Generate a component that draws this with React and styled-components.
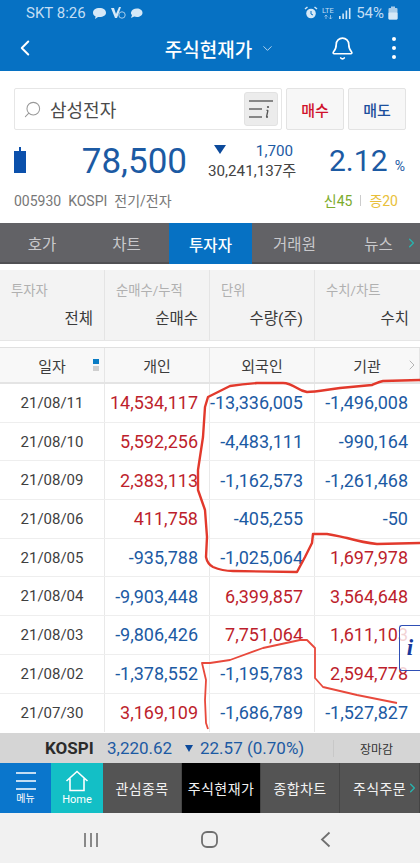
import styled, { createGlobalStyle } from "styled-components"
import { Bell, ChevronDown, ChevronLeft, ChevronRight, Search } from "lucide-react"

const FONT = `Roboto, "Noto Sans CJK KR", sans-serif`
const BLUE = "#1c5aa3"
const RED = "#bd1e2c"

const GlobalStyle = createGlobalStyle`
  html, body { margin: 0; padding: 0; background: #fff; }
  body { font-family: ${FONT}; }
  * { box-sizing: border-box; }
`

const Page = styled.div`
  position: relative;
  width: 420px;
  height: 863px;
  overflow: hidden;
  display: flex;
  flex-direction: column;
  background: #fff;
`

const TopArea = styled.header`
  height: 71px;
  background: #0671c3;
  color: #fff;
  display: flex;
  flex-direction: column;
`

const StatusBar = styled.div`
  height: 25px;
  padding: 1px 22px 0 26px;
  display: flex;
  align-items: center;
  justify-content: space-between;
  color: #c3def4;
  font-size: 15px;
`

const StatusGroup = styled.div`
  display: flex;
  align-items: center;
  gap: ${(props) => props.$gap || 4}px;
`

const TitleBar = styled.div`
  flex: 1;
  padding: 0 24px 0 12px;
  display: grid;
  grid-template-columns: 60px 1fr 60px;
  align-items: center;
`

const Title = styled.div`
  display: flex;
  align-items: center;
  justify-content: center;
  gap: 8px;
  padding-left: 32px;
  font-size: 19px;
  font-weight: 500;
  white-space: nowrap;
`

const TitleActions = styled.div`
  display: flex;
  align-items: center;
  justify-content: flex-end;
  gap: 37px;
  svg { flex-shrink: 0; }
`

const Dots = styled.div`
  display: flex;
  flex-direction: column;
  flex-shrink: 0;
  gap: 5px;
  span {
    width: 4px;
    height: 4px;
    border-radius: 50%;
    background: #fff;
  }
`

const SearchRow = styled.div`
  padding: 17px 14px 0;
  display: flex;
  gap: 4px;
`

const SearchBox = styled.div`
  width: 268px;
  height: 42px;
  padding: 0 3px 0 8px;
  display: flex;
  align-items: center;
  border: 1px solid #e6e6e6;
  border-radius: 2px;
  color: #4a4a4a;
  font-size: 18px;
`

const SearchText = styled.span`
  flex: 1;
  margin-left: 8px;
`

const ListButton = styled.div`
  width: 34px;
  height: 34px;
  display: flex;
  align-items: center;
  justify-content: center;
  background: #ececec;
  border: 1px solid #e2e2e2;
  border-radius: 3px;
`

const TradeButton = styled.div`
  width: 58px;
  height: 42px;
  display: flex;
  align-items: center;
  justify-content: center;
  background: #f7f7f7;
  border: 1px solid #e3e3e3;
  border-radius: 2px;
  color: ${(props) => props.$color};
  font-size: 15px;
  font-weight: 500;
`

const QuoteRow = styled.div`
  height: 58px;
  padding: 5px 15px 0 14px;
  display: flex;
  align-items: center;
`

const Candle = styled.div`
  position: relative;
  width: 12px;
  height: 22px;
  margin-top: 1px;
  background: #0b50ab;
  &::before {
    content: "";
    position: absolute;
    left: 5px;
    top: -4px;
    width: 2px;
    height: 4px;
    background: #0b50ab;
  }
`

const Price = styled.div`
  width: 161px;
  text-align: right;
  color: ${BLUE};
  font-size: 35px;
  line-height: 40px;
`

const Change = styled.div`
  width: 109px;
  padding-left: 21px;
  display: flex;
  flex-direction: column;
  font-size: 15.2px;
  line-height: 19px;
`

const ChangeTop = styled.div`
  display: flex;
  justify-content: space-between;
  align-items: center;
  padding-right: 3px;
  color: ${BLUE};
`

const DownMark = styled.span`
  width: 0;
  height: 0;
  border-left: ${(props) => props.$size}px solid transparent;
  border-right: ${(props) => props.$size}px solid transparent;
  border-top: ${(props) => props.$size * 1.6}px solid #0c4a9b;
  ${(props) => props.$lift && `margin-top: -5px; margin-left: 6px;`}
`

const Volume = styled.div`
  color: #444;
  white-space: nowrap;
  margin-top: 1px;
`

const Rate = styled.div`
  flex: 1;
  margin-top: -3px;
  padding-left: 33px;
  display: flex;
  align-items: baseline;
  justify-content: space-between;
  color: ${BLUE};
  font-size: 30px;
  small { font-size: 14px; }
`

const MetaRow = styled.div`
  height: 33px;
  padding: 0 22px 9px 14px;
  display: flex;
  align-items: center;
  justify-content: space-between;
  color: #777;
  font-size: 14px;
`

const Signals = styled.div`
  display: flex;
  align-items: center;
  gap: 8px;
  font-size: 14px;
  i { width: 1px; height: 11px; background: #ccc; }
`

const Signal = styled.span`
  color: ${(props) => props.$color};
`

const Tabs = styled.nav`
  height: 41px;
  margin-top: 2px;
  position: relative;
  display: grid;
  grid-template-columns: 84px 85px 83px 85px 83px;
  background: #626266;
  border-bottom: 2px solid #515154;
`

const Tab = styled.div`
  display: flex;
  align-items: center;
  justify-content: center;
  margin-bottom: ${(props) => (props.$active ? -2 : 0)}px;
  background: ${(props) => (props.$active ? "#0671c3" : "transparent")};
  color: ${(props) => (props.$active ? "#fff" : "#c9c9cc")};
  font-size: 15.5px;
  font-weight: ${(props) => (props.$active ? 500 : 400)};
`

const MoreArrow = styled.span`
  position: absolute;
  right: ${(props) => props.$right}px;
  top: 50%;
  transform: translateY(-50%);
  display: flex;
  color: ${(props) => props.$color};
`

const Filters = styled.div`
  height: 71px;
  margin-top: 6px;
  display: grid;
  grid-template-columns: 105px 105px 105px 105px;
  background: #f3f3f3;
  border-bottom: 1px solid #e6e6e6;
`

const FilterCell = styled.div`
  padding: 13px 11px 0 11px;
  display: flex;
  flex-direction: column;
  gap: 10px;
  border-right: 1px solid #e4e4e4;
  &:last-child { border-right: 0; }
`

const FilterLabel = styled.div`
  color: #b0b0b0;
  font-size: 13.3px;
  line-height: 16px;
`

const FilterValue = styled.div`
  text-align: right;
  color: #3a3a3a;
  font-size: 15.5px;
  line-height: 20px;
`

const Table = styled.div`
  margin-top: 6px;
  border-top: 1px solid #e0e0e0;
`

const HeadRow = styled.div`
  position: relative;
  height: 36px;
  display: grid;
  grid-template-columns: 105px 105px 105px 105px;
  background: #f8f8f8;
  border-bottom: 2px solid #e4e4e4;
`

const HeadCell = styled.div`
  position: relative;
  display: flex;
  align-items: center;
  justify-content: center;
  color: #3c3c3c;
  font-size: 15px;
  border-right: 1px solid #e6e6e6;
  &:last-child { border-right: 0; }
`

const SortMarks = styled.div`
  position: absolute;
  right: 5px;
  top: 11px;
  display: flex;
  flex-direction: column;
  gap: 2px;
`

const SortMark = styled.span`
  width: 6px;
  height: 5px;
  background: ${(props) => (props.$on ? "#0a7cc4" : "#cfcfcf")};
`

const Row = styled.div`
  height: 38.7px;
  display: grid;
  grid-template-columns: 105px 105px 105px 105px;
  border-bottom: 1px solid #eeeeee;
  &:last-child { border-bottom: 0; }
`

const DateCell = styled.div`
  display: flex;
  align-items: center;
  justify-content: center;
  color: #3f3f3f;
  font-size: 15px;
  border-right: 1px solid #e9e9e9;
`

const ValueCell = styled.div`
  display: flex;
  align-items: center;
  justify-content: flex-end;
  padding-right: 11px;
  color: ${(props) => (props.$value.startsWith("-") ? BLUE : RED)};
  font-size: 18px;
  white-space: nowrap;
  border-right: 1px solid #e9e9e9;
  &:last-child { border-right: 0; padding-right: 12px; }
`

const MarketBar = styled.div`
  height: 30px;
  flex-shrink: 0;
  margin-top: auto;
  padding-left: 45px;
  display: flex;
  align-items: center;
  background: #d5d5d5;
  color: ${BLUE};
  font-size: 17px;
`

const MarketName = styled.strong`
  width: 62px;
  color: #2b2b2b;
  font-size: 17px;
  font-weight: 700;
`

const MarketIndex = styled.span`
  width: 78px;
`

const MarketChange = styled.span`
  margin-left: 7px;
  width: 133px;
`

const MarketState = styled.span`
  flex: 1;
  text-align: center;
  padding-right: 1px;
  border-left: 1px solid #c8c8c8;
  color: #333;
  font-size: 12px;
`

const BottomNav = styled.nav`
  position: relative;
  height: 50px;
  flex-shrink: 0;
  display: grid;
  grid-template-columns: 51px 52px 79px 79px 79px 80px;
`

const NavIcon = styled.div`
  display: flex;
  flex-direction: column;
  align-items: center;
  justify-content: center;
  gap: 1px;
  background: ${(props) => props.$bg};
  color: #fff;
  font-size: ${(props) => props.$size}px;
  line-height: 13px;
`

const NavItem = styled.div`
  display: flex;
  align-items: center;
  justify-content: center;
  padding-bottom: 1px;
  background: ${(props) => (props.$active ? "#000" : "#545454")};
  border-right: 1px solid #454545;
  color: #f2f2f2;
  font-size: 14px;
  letter-spacing: 0.4px;
  white-space: nowrap;
`

const SystemBar = styled.div`
  height: 50px;
  flex-shrink: 0;
  padding: 3px 89px 0 83px;
  display: flex;
  align-items: center;
  justify-content: space-between;
  background: #f1f1f1;
  color: #6f6f6f;
`

const Scribble = styled.svg`
  position: absolute;
  left: 0;
  top: 0;
  pointer-events: none;
`

const InfoBadge = styled.div`
  position: absolute;
  right: 0;
  top: 625px;
  width: 21px;
  height: 46px;
  display: flex;
  align-items: center;
  justify-content: center;
  background: rgba(255, 255, 255, 0.8);
  border: 1.5px solid #2f4fb5;
  border-right: 0;
  border-radius: 3px 0 0 3px;
  color: #1a3a9c;
  font-family: "Liberation Serif", serif;
  font-size: 23px;
  font-style: italic;
  font-weight: 700;
`

const rows = [
  ["21/08/11", "14,534,117", "-13,336,005", "-1,496,008"],
  ["21/08/10", "5,592,256", "-4,483,111", "-990,164"],
  ["21/08/09", "2,383,113", "-1,162,573", "-1,261,468"],
  ["21/08/06", "411,758", "-405,255", "-50"],
  ["21/08/05", "-935,788", "-1,025,064", "1,697,978"],
  ["21/08/04", "-9,903,448", "6,399,857", "3,564,648"],
  ["21/08/03", "-9,806,426", "7,751,064", "1,611,103"],
  ["21/08/02", "-1,378,552", "-1,195,783", "2,594,778"],
  ["21/07/30", "3,169,109", "-1,686,789", "-1,527,827"],
]

const filters = [
  ["투자자", "전체"],
  ["순매수/누적", "순매수"],
  ["단위", "수량(주)"],
  ["수치/차트", "수치"],
]

const StatusLeftIcons = () => (
  <StatusGroup $gap={3}>
    <svg width="15" height="13" viewBox="0 0 15 13">
      <path d="M7.5 1C3.6 1 1 3 1 5.7c0 1.6 1 3 2.6 3.8L3 12l3-2h1.5C11.4 10 14 8.300 14 5.700 14 3 11.400 1 7.500 1z" fill="#d5e8f7" />
    </svg>
    <svg width="16" height="14" viewBox="0 0 16 14">
      <path d="M1 2h3l2 6 3-7h2L7 12H5z" fill="#d5e8f7" />
      <circle cx="12" cy="9" r="3.200" fill="none" stroke="#a9cdea" strokeWidth="1" />
    </svg>
    <svg width="15" height="13" viewBox="0 0 15 13">
      <path d="M8 1.500c3 0 5.500 1.700 5.500 4.300S11 10 8 10c-1 0-2-.2-2.800-.5L2 11l1-3C2.200 7.300 1.800 6.500 2 5.500 2.500 3 5 1.500 8 1.500z" fill="#d5e8f7" />
    </svg>
  </StatusGroup>
)

const StatusRightIcons = () => (
  <StatusGroup $gap={4}>
    <svg width="14" height="14" viewBox="0 0 14 14">
      <circle cx="7" cy="7.500" r="4.800" fill="#d5e8f7" />
      <path d="M1 3l2.500-2M13 3l-2.500-2" stroke="#d5e8f7" strokeWidth="1.500" />
      <path d="M7 5v3l2 1" stroke="#0671c3" strokeWidth="1" fill="none" />
    </svg>
    <svg width="13" height="14" viewBox="0 0 13 14">
      <text x="0" y="7" fontSize="7.500" fill="#c3def4" fontFamily="Roboto, sans-serif">LTE</text>
      <path d="M4 9v4M2.500 10.500L4 9l1.500 1.500M8.500 13V9M7 11.500L8.500 13l1.500-1.500" stroke="#a9cdea" strokeWidth="0.800" fill="none" />
    </svg>
    <svg width="13" height="13" viewBox="0 0 13 13">
      <rect x="0" y="9" width="1.600" height="3" fill="#d5e8f7" />
      <rect x="3.300" y="6.500" width="1.600" height="5.500" fill="#d5e8f7" />
      <rect x="6.600" y="3.500" width="1.600" height="8.500" fill="#d5e8f7" />
      <rect x="9.900" y="1" width="1.600" height="11" fill="#d5e8f7" />
    </svg>
    <span>54%</span>
    <svg width="10" height="14" viewBox="0 0 10 14">
      <rect x="3" y="0.500" width="4" height="2" fill="#a9cdea" />
      <rect x="0.500" y="2" width="9" height="11.500" rx="1" fill="#a9cdea" />
      <rect x="0.500" y="6.500" width="9" height="7" rx="1" fill="#d5e8f7" />
    </svg>
  </StatusGroup>
)

const ListIcon = () => (
  <svg width="26" height="22" viewBox="0 0 26 22">
    <path d="M1 3h24M1 11h13M1 19h13" stroke="#666" strokeWidth="1.500" />
    <circle cx="20" cy="9" r="1.100" fill="#555" />
    <path d="M20 12l-1.500 7M18.500 12.300H20M18 19h2" stroke="#555" strokeWidth="1.300" fill="none" />
  </svg>
)

const MenuIcon = () => (
  <svg width="22" height="20" viewBox="0 0 22 20">
    <path d="M1 2h20M1 10h20M1 18h20" stroke="#fff" strokeWidth="1.700" />
  </svg>
)

const HomeIcon = () => (
  <svg width="24" height="22" viewBox="0 0 24 22">
    <path d="M1.500 11L12 1.500 22.500 11M5 8.500V20.500h14V8.500" stroke="#fff" strokeWidth="1.600" fill="none" />
  </svg>
)

const RecentsIcon = () => (
  <svg width="16" height="16" viewBox="0 0 16 16">
    <path d="M2 1v14M8 1v14M14 1v14" stroke="currentColor" strokeWidth="1.600" />
  </svg>
)

const HomeKeyIcon = () => (
  <svg width="17" height="17" viewBox="0 0 17 17">
    <rect x="1" y="1" width="15" height="15" rx="5" fill="none" stroke="currentColor" strokeWidth="1.800" />
  </svg>
)

const BackKeyIcon = () => (
  <svg width="11" height="17" viewBox="0 0 11 17">
    <path d="M9.500 1.500L2 8.500l7.500 7" fill="none" stroke="currentColor" strokeWidth="1.800" />
  </svg>
)

const App = () => {
  return (
    <Page>
      <GlobalStyle />
      <TopArea>
        <StatusBar>
          <StatusGroup $gap={6}>
            <span>SKT 8:26</span>
            <StatusLeftIcons />
          </StatusGroup>
          <StatusRightIcons />
        </StatusBar>
        <TitleBar>
          <ChevronLeft size={26} strokeWidth={1.800} />
          <Title>
            주식현재가
            <ChevronDown size={15} strokeWidth={1.500} color="#bcd9f0" />
          </Title>
          <TitleActions>
            <Bell size={25} strokeWidth={1.600} />
            <Dots>
              <span />
              <span />
              <span />
            </Dots>
          </TitleActions>
        </TitleBar>
      </TopArea>

      <SearchRow>
        <SearchBox>
          <Search size={19} strokeWidth={1.300} color="#999" style={{ transform: "scaleX(-1)" }} />
          <SearchText>삼성전자</SearchText>
          <ListButton>
            <ListIcon />
          </ListButton>
        </SearchBox>
        <TradeButton $color="#d0112b">매수</TradeButton>
        <TradeButton $color="#1c4f9c">매도</TradeButton>
      </SearchRow>

      <QuoteRow>
        <Candle />
        <Price>78,500</Price>
        <Change>
          <ChangeTop>
            <DownMark $size={6} $lift />
            <span>1,700</span>
          </ChangeTop>
          <Volume>30,241,137주</Volume>
        </Change>
        <Rate>
          2.12
          <small>%</small>
        </Rate>
      </QuoteRow>

      <MetaRow>
        <span>005930&nbsp; KOSPI&nbsp; 전기/전자</span>
        <Signals>
          <Signal $color="#7cab2c">신45</Signal>
          <i />
          <Signal $color="#e9bf3a">증20</Signal>
        </Signals>
      </MetaRow>

      <Tabs>
        <Tab>호가</Tab>
        <Tab>차트</Tab>
        <Tab $active>투자자</Tab>
        <Tab>거래원</Tab>
        <Tab>뉴스</Tab>
        <MoreArrow $right={1} $color="#27b5b0">
          <ChevronRight size={15} strokeWidth={2} />
        </MoreArrow>
      </Tabs>

      <Filters>
        {filters.map(([label, value]) => (
          <FilterCell key={label}>
            <FilterLabel>{label}</FilterLabel>
            <FilterValue>{value}</FilterValue>
          </FilterCell>
        ))}
      </Filters>

      <Table>
        <HeadRow>
          <HeadCell>
            일자
            <SortMarks>
              <SortMark $on />
              <SortMark />
            </SortMarks>
          </HeadCell>
          <HeadCell>개인</HeadCell>
          <HeadCell>외국인</HeadCell>
          <HeadCell>기관</HeadCell>
          <MoreArrow $right={0} $color="#b5b5b5">
            <ChevronRight size={16} strokeWidth={1.500} />
          </MoreArrow>
        </HeadRow>
        {rows.map(([date, ...values]) => (
          <Row key={date}>
            <DateCell>{date}</DateCell>
            {values.map((value, i) => (
              <ValueCell key={i} $value={value}>{value}</ValueCell>
            ))}
          </Row>
        ))}
      </Table>

      <MarketBar>
        <MarketName>KOSPI</MarketName>
        <MarketIndex>3,220.62</MarketIndex>
        <DownMark $size={4.500} />
        <MarketChange>22.57 (0.70%)</MarketChange>
        <MarketState>장마감</MarketState>
      </MarketBar>

      <BottomNav>
        <NavIcon $bg="#0a76cc" $size={10}>
          <MenuIcon />
          메뉴
        </NavIcon>
        <NavIcon $bg="#13bfc6" $size={11}>
          <HomeIcon />
          Home
        </NavIcon>
        <NavItem>관심종목</NavItem>
        <NavItem $active>주식현재가</NavItem>
        <NavItem>종합차트</NavItem>
        <NavItem>주식주문</NavItem>
        <MoreArrow $right={0} $color="#27b5b0">
          <ChevronRight size={15} strokeWidth={2} />
        </MoreArrow>
      </BottomNav>

      <SystemBar>
        <RecentsIcon />
        <HomeKeyIcon />
        <BackKeyIcon />
      </SystemBar>

      <InfoBadge>i</InfoBadge>

      <Scribble width="420" height="863" viewBox="0 0 420 863" fill="none">
        <path
          d="M420 380L383 381C378 382 375 384 372 385L340 388C325 390 315 392 307 392C302 391 300 390 297 388C292 385 288 383 283 383L257 383C245 384 237 385 230 386C222 390 214 394 208 397L205 407L203 437L198 470L198 490L205 510L207 537L206 557C207 562 209 565 213 567C220 570 226 571 233 571L297 572L305 557L312 543L313 534L327 534C335 535 341 537 347 538C358 541 367 543 377 544L420 543"
          stroke="#e2392c"
          strokeWidth="2.400"
          strokeLinejoin="round"
        />
        <path
          d="M208 729L206 723L205 700L206 680L202 663L210 663L230 660L263 648L300 640L307 640L315 648L315 678L323 687L357 695L397 703"
          stroke="#e8493c"
          strokeWidth="1.800"
          strokeLinejoin="round"
        />
      </Scribble>
    </Page>
  )
}

export default App
